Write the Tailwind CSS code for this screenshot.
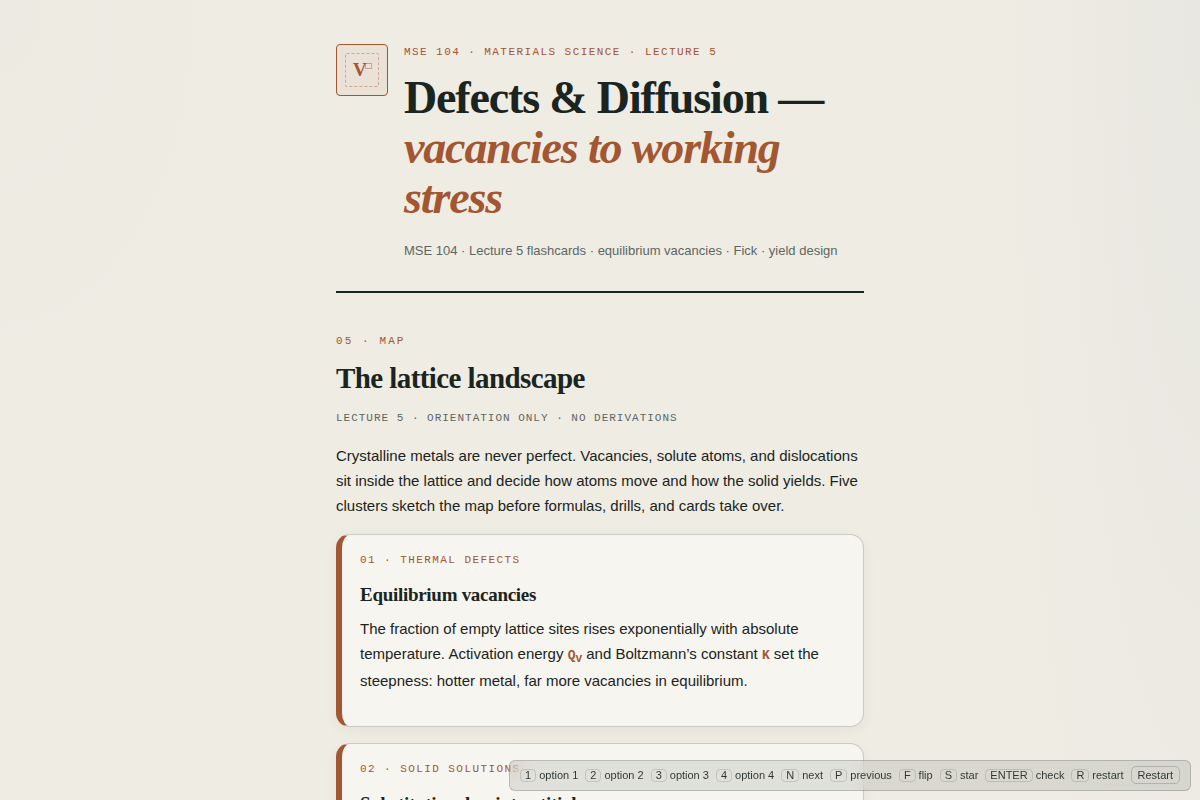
<!DOCTYPE html>
<html lang="en">
<head>
    <meta charset="UTF-8">
    <meta name="viewport" content="width=device-width, initial-scale=1.0">
    <title>Defects &amp; Diffusion - MSE 104 Lecture 5</title>
    <script src="https://cdn.jsdelivr.net/npm/@tailwindcss/browser@4"></script>
</head>
<body class="min-h-screen bg-[#efece4] bg-[radial-gradient(200px_1200px_at_100%_0,#7896aa10,transparent),radial-gradient(240px_400px_at_0_0,#1a242103,transparent)] bg-no-repeat font-['Liberation_Sans',sans-serif] text-[15px] leading-[25px] text-[#1a2421]">

    <div class="mx-auto max-w-[576px] px-6 pt-11 pb-24">
        <header class="flex items-start gap-4 border-b-2 border-[#1a2421] pb-[29px]">
            <svg class="size-[52px] shrink-0" viewBox="0 0 52 52" fill="none" role="img" aria-label="Vacancy">
                <rect x="0.5" y="0.5" width="51" height="51" rx="3.5" fill="#a35632" fill-opacity="0.07" stroke="#a35632" />
                <rect x="9.5" y="9.5" width="33" height="33" rx="1" stroke="#a35632" stroke-opacity="0.4" stroke-dasharray="3 2" />
                <text x="17" y="32" font-family="Liberation Serif, serif" font-size="19" font-weight="700" fill="#a35632">V</text>
                <rect x="29.5" y="19.5" width="6" height="5" stroke="#a35632" stroke-opacity="0.45" />
            </svg>
            <div>
                <p class="font-['Liberation_Mono',monospace] text-[11px] leading-4 tracking-[0.13em] text-[#a35632] uppercase">MSE 104 · Materials Science · Lecture 5</p>
                <h1 class="mt-[13px] font-['Liberation_Serif',serif] text-[46px] leading-[50px] font-bold tracking-tight">Defects &amp; Diffusion — <em class="text-[#a35632]">vacancies to working stress</em></h1>
                <p class="mt-[17px] text-[13px] leading-[22px] text-[#5c6763]">MSE 104 · Lecture 5 flashcards · equilibrium vacancies · Fick · yield design</p>
            </div>
        </header>

        <main class="mt-10">
            <p class="font-['Liberation_Mono',monospace] text-[11px] leading-4 tracking-[0.19em] text-[#a35632] uppercase">05 · Map</p>
            <h2 class="mt-[11px] font-['Liberation_Serif',serif] text-[29px] leading-9 font-bold tracking-[-0.02em]">The lattice landscape</h2>
            <p class="mt-[14px] font-['Liberation_Mono',monospace] text-[11px] leading-4 tracking-[0.09em] text-[#5c6763] uppercase">Lecture 5 · Orientation only · No derivations</p>
            <p class="mt-[17px]">Crystalline metals are never perfect. Vacancies, solute atoms, and dislocations sit inside the lattice and decide how atoms move and how the solid yields. Five clusters sketch the map before formulas, drills, and cards take over.</p>

            <div class="mt-4 flex flex-col gap-4">
                <article class="rounded-[14px] border border-l-[6px] border-[#1a2421]/20 border-l-[#a35632] bg-[#f7f5f0] px-[18px] pt-[17px] pb-[33px] shadow-[0_4px_14px_#1a24210d]">
                    <p class="font-['Liberation_Mono',monospace] text-[11px] leading-4 tracking-[0.13em] text-[#a35632] uppercase">01 · Thermal defects</p>
                    <h3 class="mt-[15px] font-['Liberation_Serif',serif] text-[19px] leading-6 font-bold tracking-[-0.015em]">Equilibrium vacancies</h3>
                    <p class="mt-[9px]">The fraction of empty lattice sites rises exponentially with absolute temperature. Activation energy <b class="font-['Liberation_Mono',monospace] text-[13px] text-[#a35632]">Q<sub class="text-[11px]">V</sub></b> and Boltzmann’s constant <b class="font-['Liberation_Mono',monospace] text-[13px] text-[#a35632]">K</b> set the steepness: hotter metal, far more vacancies in equilibrium.</p>
                </article>
                <article class="rounded-[14px] border border-l-[6px] border-[#1a2421]/20 border-l-[#a35632] bg-[#f7f5f0] px-[18px] pt-[17px] pb-[33px] shadow-[0_4px_14px_#1a24210d]">
                    <p class="font-['Liberation_Mono',monospace] text-[11px] leading-4 tracking-[0.13em] text-[#a35632] uppercase">02 · Solid solutions</p>
                    <h3 class="mt-[15px] font-['Liberation_Serif',serif] text-[19px] leading-6 font-bold tracking-[-0.015em]">Substitutional vs interstitial</h3>
                </article>
            </div>
        </main>
    </div>

    <!-- keyboard shortcuts -->
    <div class="fixed right-[9px] bottom-[9px] flex items-center gap-[7px] rounded-md border border-[#1a2421]/20 bg-[#1a2421]/10 px-[10px] pt-[5px] pb-[6px] text-[11px] leading-4 whitespace-nowrap text-[#1a2421]/90 backdrop-blur-sm">
        <span class="flex items-center gap-[3px]"><kbd class="rounded-[4px] border border-[#1a2421]/15 px-1 font-['Liberation_Sans',sans-serif] leading-[11px]">1</kbd>option 1</span>
        <span class="flex items-center gap-[3px]"><kbd class="rounded-[4px] border border-[#1a2421]/15 px-1 font-['Liberation_Sans',sans-serif] leading-[11px]">2</kbd>option 2</span>
        <span class="flex items-center gap-[3px]"><kbd class="rounded-[4px] border border-[#1a2421]/15 px-1 font-['Liberation_Sans',sans-serif] leading-[11px]">3</kbd>option 3</span>
        <span class="flex items-center gap-[3px]"><kbd class="rounded-[4px] border border-[#1a2421]/15 px-1 font-['Liberation_Sans',sans-serif] leading-[11px]">4</kbd>option 4</span>
        <span class="flex items-center gap-[3px]"><kbd class="rounded-[4px] border border-[#1a2421]/15 px-1 font-['Liberation_Sans',sans-serif] leading-[11px]">N</kbd>next</span>
        <span class="flex items-center gap-[3px]"><kbd class="rounded-[4px] border border-[#1a2421]/15 px-1 font-['Liberation_Sans',sans-serif] leading-[11px]">P</kbd>previous</span>
        <span class="flex items-center gap-[3px]"><kbd class="rounded-[4px] border border-[#1a2421]/15 px-1 font-['Liberation_Sans',sans-serif] leading-[11px]">F</kbd>flip</span>
        <span class="flex items-center gap-[3px]"><kbd class="rounded-[4px] border border-[#1a2421]/15 px-1 font-['Liberation_Sans',sans-serif] leading-[11px]">S</kbd>star</span>
        <span class="flex items-center gap-[3px]"><kbd class="rounded-[4px] border border-[#1a2421]/15 px-1 font-['Liberation_Sans',sans-serif] leading-[11px]">ENTER</kbd>check</span>
        <span class="flex items-center gap-[3px]"><kbd class="rounded-[4px] border border-[#1a2421]/15 px-1 font-['Liberation_Sans',sans-serif] leading-[11px]">R</kbd>restart</span>
        <button type="button" class="rounded-[5px] border border-[#1a2421]/20 px-[6px]">Restart</button>
    </div>

</body>
</html>
